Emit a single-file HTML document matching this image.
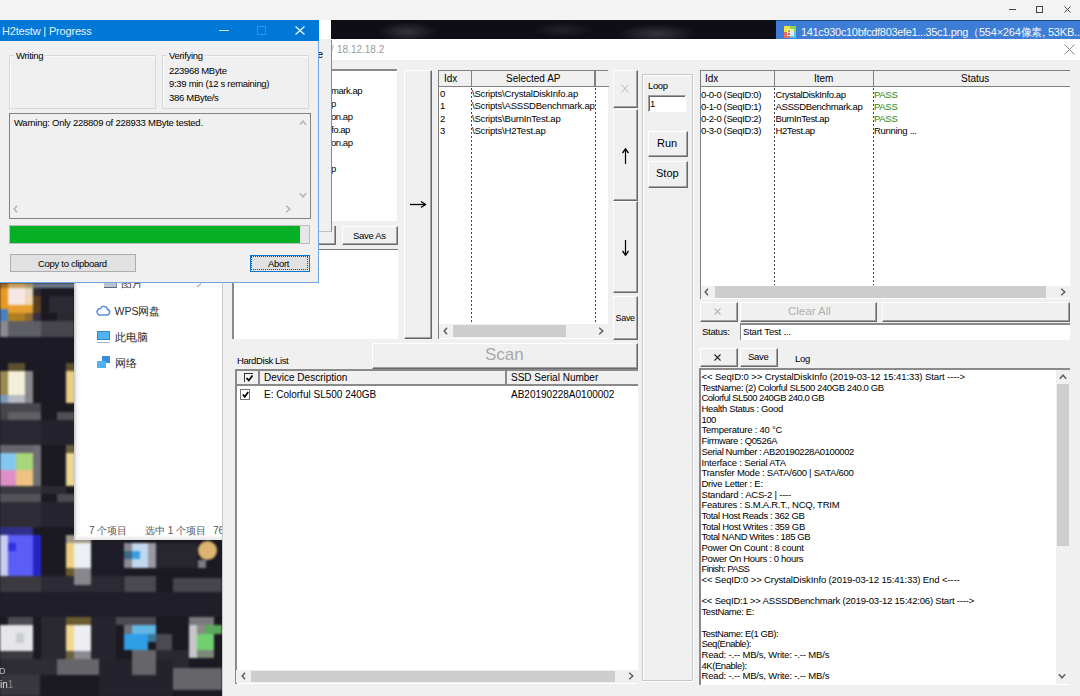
<!DOCTYPE html>
<html><head><meta charset="utf-8">
<style>
*{margin:0;padding:0;box-sizing:border-box}
html,body{width:1080px;height:696px;overflow:hidden;background:#f0f0f0;font-family:"Liberation Sans",sans-serif;color:#000}
.a{position:absolute}
.t{font-size:9.5px;letter-spacing:-0.3px;white-space:pre;line-height:1}
.h{font-size:10px;white-space:pre;line-height:1}
.btn{position:absolute;background:#f0f0f0;border-top:1px solid #fff;border-left:1px solid #fff;border-right:1px solid #696969;border-bottom:1px solid #696969;box-shadow:inset -1px -1px 0 #a0a0a0}
.sunk{position:absolute;background:#fff;border-top:1px solid #a0a0a0;border-left:1px solid #a0a0a0;border-right:1px solid #fff;border-bottom:1px solid #fff;box-shadow:inset 1px 1px 0 #696969}
.dl{position:absolute;width:1px;background:repeating-linear-gradient(#444 0 2px,transparent 2px 4px)}
.sb{position:absolute;background:#f0f0f0}
.thumb{position:absolute;background:#cdcdcd}
.arr{position:absolute;font-size:10px;color:#606060;line-height:1}
</style></head><body>

<!-- top bar -->
<div class="a" style="left:0;top:0;width:1080px;height:20px;background:#f3f3f3"></div>
<div class="a" style="left:1009px;top:9px;width:7px;height:1px;background:#444"></div>
<div class="a" style="left:1036px;top:5.5px;width:7px;height:7px;border:1px solid #444"></div>
<svg class="a" style="left:1064px;top:5.5px" width="7" height="7"><path d="M0.5 0.5L6.5 6.5M6.5 0.5L0.5 6.5" stroke="#444" stroke-width="1"/></svg>

<!-- dark image band + blue tab -->
<div class="a" style="left:319px;top:20px;width:12px;height:19px;background:#fff"></div>
<div class="a" style="left:331px;top:20px;width:445px;height:19px;background:radial-gradient(ellipse 30px 10px at 76px 12px,#34343c,transparent),radial-gradient(ellipse 40px 10px at 326px 14px,#34343c,transparent),radial-gradient(ellipse 30px 8px at 232px 10px,#22222a,transparent),#0f0e16"></div>
<div class="a" style="left:776px;top:20px;width:304px;height:19px;background:#3d7dd6;border-top:1px solid #1d4a8f"></div>
<div class="a" style="left:784px;top:26px;width:12px;height:12px;background:conic-gradient(from 0deg at 50% 50%,#8ad850 0 25%,#5cc8e8 25% 50%,#e8705a 50% 75%,#f0e040 75% 100%)"></div>
<div class="a" style="left:786.5px;top:28.5px;width:7px;height:7px;background:#f4f4e8;opacity:.85"></div>
<div class="a" style="left:787.5px;top:30px;width:2px;height:2px;background:#c0a030"></div>
<div class="a" style="left:787.5px;top:33px;width:2px;height:2px;background:#d06050"></div>
<div class="a" style="left:801px;top:24.5px;font-size:11px;letter-spacing:-0.33px;color:#f4f8ff;white-space:pre;line-height:14px">141c930c10bfcdf803efe1...35c1.png<span style="letter-spacing:-0.2px">（554×264像素, 53KB...</span></div>

<!-- main app title bar -->
<div class="a" style="left:331px;top:39px;width:749px;height:21px;background:#fff"></div>
<div class="a h" style="left:337px;top:45px;color:#9a9a9a;font-size:10px">18.12.18.2</div>
<svg class="a" style="left:1064px;top:44px" width="11" height="11"><path d="M0.5 0.5L10.5 10.5M10.5 0.5L0.5 10.5" stroke="#888" stroke-width="1"/></svg>

<!-- main app body -->
<div class="a" style="left:222px;top:60px;width:858px;height:636px;background:#f0f0f0;border-left:1px solid #c8c8c8"></div>


<!-- scripts listbox (partially hidden) -->
<div class="a" style="left:300px;top:69px;width:97px;height:152px;background:#fff;border-top:2px solid #8a8a8a"></div>
<div class="a t" style="left:331px;top:84px;line-height:13px;letter-spacing:-0.45px">mark.ap
p
on.ap
fo.ap
on.ap

p</div>
<!-- strip of window behind progress -->
<div class="a" style="left:332px;top:45px;width:1px;height:6px;background:#b0b0b0;transform:skewX(-15deg)"></div>
<div class="btn" style="left:300px;top:226px;width:36px;height:19px;border-top:0"></div>
<div class="a" style="left:319px;top:40px;width:13px;height:192px;background:#f0f0f0;border-right:1px solid #8a8a8a;border-bottom:1px solid #c0c0c0"></div>
<div class="a" style="left:317.5px;top:50px;font-size:10px;line-height:1">e</div>
<div class="btn" style="left:342px;top:226px;width:56px;height:19px"></div>
<div class="a t" style="left:353px;top:231px">Save As</div>
<!-- second listbox -->
<div class="a" style="left:232px;top:248.5px;width:166px;height:90px;background:#fff;border-top:1.5px solid #777;border-left:2px solid #8a8a8a"></div>
<!-- arrow button -->
<div class="btn" style="left:404px;top:70px;width:28px;height:269px"></div>
<svg class="a" style="left:409px;top:200px" width="18" height="9"><path d="M1 4.5H16" stroke="#000" stroke-width="1.3"/><path d="M12 1.5L16.5 4.5L12 7.5" stroke="#000" stroke-width="1.3" fill="none"/></svg>

<!-- selected AP listview -->
<div class="a" style="left:437.5px;top:69.5px;width:170.5px;height:269px;background:#fff;border-top:1.5px solid #808080;border-left:1.5px solid #808080"></div>
<div class="a" style="left:439px;top:71px;width:169.5px;height:15.5px;background:#f0f0f0;border-bottom:1.5px solid #808080"></div>
<div class="a" style="left:470.5px;top:71px;width:1.5px;height:15px;background:#808080"></div>
<div class="a" style="left:594px;top:71px;width:1.5px;height:15px;background:#808080"></div>
<div class="a h" style="left:444px;top:74px">Idx</div>
<div class="a h" style="left:506px;top:74px">Selected AP</div>
<div class="dl" style="left:471px;top:88px;height:236px"></div>
<div class="dl" style="left:594.5px;top:88px;height:236px"></div>
<div class="a t" style="left:440px;top:88px;line-height:12.3px">0
1
2
3</div>
<div class="a t" style="left:472px;top:88px;line-height:12.3px;letter-spacing:-0.2px">\Scripts\CrystalDiskInfo.ap
\Scripts\ASSSDBenchmark.ap
\Scripts\BurnInTest.ap
\Scripts\H2Test.ap</div>
<div class="sb" style="left:439px;top:324px;width:170px;height:14px"></div>
<div class="thumb" style="left:453px;top:325px;width:113px;height:12px"></div>
<svg class="a" style="left:442.5px;top:326.5px" width="6" height="8"><path d="M4.0 0.8L1.2 4L4.0 7.2" stroke="#606060" stroke-width="1.5" fill="none"/></svg>
<svg class="a" style="left:597.5px;top:326.5px" width="6" height="8"><path d="M1.2 0.8L4.8 4L1.2 7.2" stroke="#606060" stroke-width="1.5" fill="none"/></svg>

<!-- small buttons column -->
<div class="btn" style="left:613px;top:70px;width:25px;height:38px"></div>
<svg class="a" style="left:621px;top:84px" width="8" height="9"><path d="M0.5 0.5L7.5 8.5M7.5 0.5L0.5 8.5" stroke="#b8b8b8" stroke-width="1"/></svg>
<div class="btn" style="left:613px;top:109px;width:25px;height:92px"></div>
<svg class="a" style="left:621px;top:148px" width="9" height="17"><path d="M4.5 16V1" stroke="#000" stroke-width="1.2"/><path d="M1.5 5L4.5 0.8L7.5 5" stroke="#000" stroke-width="1.3" fill="none"/></svg>
<div class="btn" style="left:613px;top:201px;width:25px;height:92px"></div>
<svg class="a" style="left:621px;top:239px" width="9" height="17"><path d="M4.5 1V16" stroke="#000" stroke-width="1.2"/><path d="M1.5 12L4.5 16.2L7.5 12" stroke="#000" stroke-width="1.3" fill="none"/></svg>
<div class="btn" style="left:613px;top:296px;width:25px;height:44px"></div>
<div class="a t" style="left:615.5px;top:314px;font-size:9px;letter-spacing:-0.3px">Save</div>

<!-- Scan button -->
<div class="btn" style="left:372px;top:343px;width:266px;height:26px"></div>
<div class="a" style="left:485px;top:346px;font-size:17px;color:#a8a8a8;line-height:17px">Scan</div>

<!-- HardDisk list -->
<div class="a t" style="left:237px;top:356px;font-size:9.5px;letter-spacing:-0.4px">HardDisk List</div>
<div class="a" style="left:234.5px;top:368.5px;width:403.5px;height:315px;background:#fff;border-top:2px solid #8a8a8a;border-left:2px solid #8a8a8a"></div>
<div class="a" style="left:236.5px;top:370.5px;width:401.5px;height:15px;background:#f0f0f0;border-bottom:2px solid #8a8a8a"></div>
<div class="a" style="left:258px;top:370.5px;width:1.5px;height:14px;background:#8a8a8a"></div>
<div class="a" style="left:505px;top:370.5px;width:1.5px;height:14px;background:#8a8a8a"></div>
<div class="a" style="left:244px;top:373px;width:9px;height:9px;border-top:1.5px solid #333;border-left:1.5px solid #333;background:#f4f4f4"></div>
<svg class="a" style="left:245px;top:374px" width="9" height="8"><path d="M1.5 4L3.8 6.5L7.5 1.5" stroke="#000" stroke-width="1.7" fill="none"/></svg>
<div class="a h" style="left:264px;top:373px">Device Description</div>
<div class="a h" style="left:511px;top:373px">SSD Serial Number</div>
<div class="a" style="left:239.5px;top:389px;width:10.5px;height:10.5px;border:1.5px solid #777;background:#fff"></div>
<svg class="a" style="left:240.5px;top:390px" width="9" height="9"><path d="M1.8 4.5L3.8 6.8L7.2 2" stroke="#000" stroke-width="1.7" fill="none"/></svg>
<div class="a h" style="left:264px;top:390px">E: Colorful SL500 240GB</div>
<div class="a h" style="left:511px;top:390px">AB20190228A0100002</div>
<div class="sb" style="left:236px;top:670px;width:402px;height:13px"></div>
<div class="thumb" style="left:251px;top:671px;width:364px;height:11px"></div>
<svg class="a" style="left:240.5px;top:672.0px" width="6" height="8"><path d="M4.0 0.8L1.2 4L4.0 7.2" stroke="#606060" stroke-width="1.5" fill="none"/></svg>
<svg class="a" style="left:627.5px;top:672.0px" width="6" height="8"><path d="M1.2 0.8L4.8 4L1.2 7.2" stroke="#606060" stroke-width="1.5" fill="none"/></svg>

<!-- Loop groupbox -->
<div class="a" style="left:642px;top:74px;width:51px;height:607px;border:1px solid #c8c8c8;box-shadow:inset 1px 1px 0 #fff, 1px 1px 0 #fff"></div>
<div class="a t" style="left:648px;top:81px;font-size:9.5px;letter-spacing:-0.4px">Loop</div>
<div class="sunk" style="left:648px;top:95px;width:38px;height:17px"></div>
<div class="a t" style="left:650px;top:99px">1</div>
<div class="btn" style="left:648px;top:131px;width:40px;height:26px"></div>
<div class="a" style="left:657px;top:138px;font-size:11px;line-height:11px">Run</div>
<div class="btn" style="left:648px;top:161px;width:40px;height:27px"></div>
<div class="a" style="left:656px;top:168px;font-size:11px;line-height:11px">Stop</div>


<!-- status listview -->
<div class="a" style="left:699.5px;top:69.5px;width:370px;height:229px;background:#fff;border-top:1.5px solid #808080;border-left:1.5px solid #808080"></div>
<div class="a" style="left:701px;top:71px;width:368.5px;height:15.5px;background:#f0f0f0;border-bottom:1.5px solid #808080"></div>
<div class="a" style="left:773.5px;top:71px;width:1.5px;height:15px;background:#808080"></div>
<div class="a" style="left:872.5px;top:71px;width:1.5px;height:15px;background:#808080"></div>
<div class="a h" style="left:705px;top:74px">Idx</div>
<div class="a h" style="left:814px;top:74px">Item</div>
<div class="a h" style="left:961px;top:74px">Status</div>
<div class="dl" style="left:774px;top:88px;height:197px"></div>
<div class="dl" style="left:873px;top:88px;height:197px"></div>
<div class="a t" style="left:701px;top:88.5px;line-height:12.33px;letter-spacing:-0.37px">0-0-0 (SeqID:0)
0-1-0 (SeqID:1)
0-2-0 (SeqID:2)
0-3-0 (SeqID:3)</div>
<div class="a t" style="left:775.5px;top:88.5px;line-height:12.33px;letter-spacing:-0.39px">CrystalDiskInfo.ap
ASSSDBenchmark.ap
BurnInTest.ap
H2Test.ap</div>
<div class="a t" style="left:874px;top:88.5px;line-height:12.33px"><span style="color:#1a8a1a">PASS
PASS
PASS</span>
Running ...</div>
<div class="sb" style="left:701px;top:286px;width:369px;height:12px"></div>
<div class="thumb" style="left:715px;top:286px;width:331px;height:12px"></div>
<svg class="a" style="left:704.0px;top:288.0px" width="6" height="8"><path d="M4.0 0.8L1.2 4L4.0 7.2" stroke="#606060" stroke-width="1.5" fill="none"/></svg>
<svg class="a" style="left:1059.5px;top:288.0px" width="6" height="8"><path d="M1.2 0.8L4.8 4L1.2 7.2" stroke="#606060" stroke-width="1.5" fill="none"/></svg>

<!-- buttons row -->
<div class="btn" style="left:700px;top:302px;width:38px;height:20px"></div>
<svg class="a" style="left:714px;top:308px" width="7" height="7"><path d="M0.5 0.5L6.5 6.5M6.5 0.5L0.5 6.5" stroke="#b4b4b4" stroke-width="1.1"/></svg>
<div class="btn" style="left:740px;top:302px;width:137px;height:20px"></div>
<div class="a" style="left:788px;top:305px;font-size:11.5px;color:#b0b0b0;line-height:12px">Clear All</div>
<div class="btn" style="left:882px;top:302px;width:188px;height:20px"></div>
<!-- status row -->
<div class="a t" style="left:702px;top:327px">Status:</div>
<div class="a" style="left:740px;top:323px;width:330px;height:17px;background:#fff;border-top:2px solid #8a8a8a;border-left:1px solid #8a8a8a"></div>
<div class="a t" style="left:743px;top:327px;letter-spacing:-0.2px">Start Test ...</div>
<!-- X save log -->
<div class="btn" style="left:700px;top:348px;width:38px;height:19px"></div>
<svg class="a" style="left:714px;top:354px" width="7" height="7"><path d="M0.5 0.5L6.5 6.5M6.5 0.5L0.5 6.5" stroke="#222" stroke-width="1.1"/></svg>
<div class="btn" style="left:740px;top:348px;width:38px;height:19px"></div>
<div class="a t" style="left:748px;top:352px">Save</div>
<div class="a t" style="left:795px;top:354px">Log</div>

<!-- log box -->
<div class="a" style="left:699px;top:368px;width:371px;height:317px;background:#fff;border-top:2px solid #8a8a8a;border-left:2px solid #8a8a8a"></div>
<div class="sb" style="left:1056px;top:370px;width:14px;height:314px"></div>
<div class="thumb" style="left:1057px;top:384px;width:12px;height:162px"></div>
<svg class="a" style="left:1058.5px;top:374.0px" width="8" height="6"><path d="M0.8 4.8L4 1.2L7.2 4.8" stroke="#606060" stroke-width="1.5" fill="none"/></svg>
<svg class="a" style="left:1058.0px;top:673.0px" width="8" height="6"><path d="M0.8 1.2L4 4.8L7.2 1.2" stroke="#606060" stroke-width="1.5" fill="none"/></svg>
<div class="a t" style="left:701.5px;top:372px;line-height:10.68px"><span style="letter-spacing:-0.09px">&lt;&lt; SeqID:0 &gt;&gt; CrystalDiskInfo (2019-03-12 15:41:33) Start ----&gt;</span>
<span style="letter-spacing:-0.42px">TestName: (2) Colorful SL500 240GB 240.0 GB</span>
<span style="letter-spacing:-0.53px">Colorful SL500 240GB 240.0 GB</span>
<span style="letter-spacing:-0.34px">Health Status : Good</span>
<span style="letter-spacing:-0.55px">100</span>
<span style="letter-spacing:-0.23px">Temperature : 40 °C</span>
<span style="letter-spacing:-0.39px">Firmware : Q0526A</span>
<span style="letter-spacing:-0.41px">Serial Number : AB20190228A0100002</span>
<span style="letter-spacing:-0.18px">Interface : Serial ATA</span>
<span style="letter-spacing:-0.25px">Transfer Mode : SATA/600 | SATA/600</span>
<span style="letter-spacing:-0.28px">Drive Letter : E:</span>
<span style="letter-spacing:-0.21px">Standard : ACS-2 | ----</span>
<span style="letter-spacing:-0.24px">Features : S.M.A.R.T., NCQ, TRIM</span>
<span style="letter-spacing:-0.38px">Total Host Reads : 362 GB</span>
<span style="letter-spacing:-0.32px">Total Host Writes : 359 GB</span>
<span style="letter-spacing:-0.40px">Total NAND Writes : 185 GB</span>
<span style="letter-spacing:-0.30px">Power On Count : 8 count</span>
<span style="letter-spacing:-0.34px">Power On Hours : 0 hours</span>
<span style="letter-spacing:-0.62px">Finish: PASS</span>
<span style="letter-spacing:-0.13px">&lt;&lt; SeqID:0 &gt;&gt; CrystalDiskInfo (2019-03-12 15:41:33) End &lt;----</span>

<span style="letter-spacing:-0.20px">&lt;&lt; SeqID:1 &gt;&gt; ASSSDBenchmark (2019-03-12 15:42:06) Start ----&gt;</span>
<span style="letter-spacing:-0.38px">TestName: E:</span>

<span style="letter-spacing:-0.46px">TestName: E(1 GB):</span>
<span style="letter-spacing:-0.50px">Seq(Enable):</span>
<span style="letter-spacing:-0.17px">Read: -.-- MB/s, Write: -.-- MB/s</span>
<span style="letter-spacing:-0.45px">4K(Enable):</span>
<span style="letter-spacing:-0.17px">Read: -.-- MB/s, Write: -.-- MB/s</span></div>


<!-- ===== desktop mosaic ===== -->
<div class="a" style="left:0;top:283px;width:222px;height:413px;background:#1b1922;overflow:hidden"><div class="a" style="left:0;top:-283px;width:222px;height:696px;filter:blur(0.9px)">
<!--MOS-->
<div class="a" style="left:57px;top:296px;width:17px;height:25px;background:#2a2830"></div>
<div class="a" style="left:49px;top:321px;width:25px;height:16px;background:#4a4a52"></div>
<div class="a" style="left:8px;top:321px;width:33px;height:16px;background:#56565e"></div>
<div class="a" style="left:0px;top:337px;width:76px;height:25px;background:#1c1a26"></div>
<div class="a" style="left:41px;top:363px;width:25px;height:40px;background:#1a1824"></div>
<div class="a" style="left:0px;top:403px;width:41px;height:10px;background:#46464c"></div>
<div class="a" style="left:41px;top:420px;width:35px;height:25px;background:#24222c"></div>
<div class="a" style="left:0px;top:420px;width:41px;height:25px;background:#2a2832"></div>
<div class="a" style="left:41px;top:486px;width:25px;height:8px;background:#2c2a34"></div>
<div class="a" style="left:0px;top:486px;width:41px;height:8px;background:#3a3a42"></div>
<div class="a" style="left:41px;top:502px;width:35px;height:25px;background:#26242e"></div>
<div class="a" style="left:0px;top:502px;width:41px;height:25px;background:#2e2c36"></div>
<div class="a" style="left:91px;top:535px;width:33px;height:41px;background:#1e1c26"></div>
<div class="a" style="left:156px;top:543px;width:41px;height:25px;background:#28262e"></div>
<div class="a" style="left:41px;top:576px;width:82px;height:16px;background:#2c2a34"></div>
<div class="a" style="left:0px;top:592px;width:222px;height:25px;background:#201e28"></div>
<div class="a" style="left:41px;top:617px;width:25px;height:42px;background:#2a2830"></div>
<div class="a" style="left:91px;top:617px;width:25px;height:42px;background:#26242e"></div>
<div class="a" style="left:156px;top:650px;width:33px;height:18px;background:#2a2830"></div>
<div class="a" style="left:99px;top:659px;width:74px;height:37px;background:#24222c"></div>
<div class="a" style="left:0px;top:659px;width:57px;height:16px;background:#2e2c34"></div>
<div class="a" style="left:0px;top:283px;width:8px;height:5px;background:#a86a20"></div>
<div class="a" style="left:8px;top:283px;width:17px;height:5px;background:#c8a060"></div>
<div class="a" style="left:25px;top:283px;width:8px;height:5px;background:#a89870"></div>
<div class="a" style="left:33px;top:283px;width:42px;height:5px;background:#6a7888"></div>
<div class="a" style="left:0px;top:288px;width:8px;height:21px;background:#e89a20"></div>
<div class="a" style="left:8px;top:288px;width:17px;height:17px;background:#f6e6e4"></div>
<div class="a" style="left:25px;top:288px;width:8px;height:8px;background:#e8d8c0"></div>
<div class="a" style="left:25px;top:296px;width:8px;height:9px;background:#f0d8b0"></div>
<div class="a" style="left:8px;top:305px;width:25px;height:8px;background:#e8a030"></div>
<div class="a" style="left:8px;top:313px;width:17px;height:8px;background:#b08020"></div>
<div class="a" style="left:25px;top:313px;width:8px;height:8px;background:#8a6a30"></div>
<div class="a" style="left:33px;top:288px;width:8px;height:8px;background:#2a2830"></div>
<div class="a" style="left:33px;top:296px;width:8px;height:17px;background:#5a4020"></div>
<div class="a" style="left:33px;top:313px;width:8px;height:8px;background:#3a3040"></div>
<div class="a" style="left:0px;top:309px;width:8px;height:12px;background:#4a80c0"></div>
<div class="a" style="left:8px;top:321px;width:33px;height:16px;background:#5e5e66"></div>
<div class="a" style="left:0px;top:321px;width:8px;height:16px;background:#8a8a90"></div>
<div class="a" style="left:49px;top:296px;width:25px;height:17px;background:#2c2a33"></div>
<div class="a" style="left:41px;top:321px;width:33px;height:16px;background:#47464d"></div>
<div class="a" style="left:8px;top:363px;width:17px;height:8px;background:#5a5030"></div>
<div class="a" style="left:0px;top:371px;width:8px;height:24px;background:#9a8a50"></div>
<div class="a" style="left:8px;top:371px;width:17px;height:24px;background:#f3efd9"></div>
<div class="a" style="left:8px;top:395px;width:17px;height:8px;background:#b8bcc2"></div>
<div class="a" style="left:25px;top:371px;width:8px;height:32px;background:#88888c"></div>
<div class="a" style="left:0px;top:395px;width:8px;height:8px;background:#7a9ac0"></div>
<div class="a" style="left:66px;top:363px;width:9px;height:8px;background:#5a5030"></div>
<div class="a" style="left:66px;top:371px;width:9px;height:32px;background:#e8d082"></div>
<div class="a" style="left:8px;top:412px;width:33px;height:8px;background:#606064"></div>
<div class="a" style="left:57px;top:412px;width:18px;height:8px;background:#505054"></div>
<div class="a" style="left:0px;top:403px;width:8px;height:17px;background:#45454a"></div>
<div class="a" style="left:0px;top:445px;width:33px;height:8px;background:#66666c"></div>
<div class="a" style="left:33px;top:445px;width:8px;height:41px;background:#707074"></div>
<div class="a" style="left:0px;top:453px;width:16px;height:17px;background:#82c8ee"></div>
<div class="a" style="left:16px;top:453px;width:17px;height:17px;background:#a8d67a"></div>
<div class="a" style="left:0px;top:470px;width:16px;height:16px;background:#de90c6"></div>
<div class="a" style="left:16px;top:470px;width:17px;height:16px;background:#efc282"></div>
<div class="a" style="left:66px;top:453px;width:9px;height:33px;background:#ecd690"></div>
<div class="a" style="left:66px;top:445px;width:9px;height:8px;background:#6a6040"></div>
<div class="a" style="left:0px;top:494px;width:41px;height:8px;background:#545458"></div>
<div class="a" style="left:57px;top:494px;width:18px;height:8px;background:#4a4a50"></div>
<div class="a" style="left:0px;top:527px;width:33px;height:8px;background:#303088"></div>
<div class="a" style="left:0px;top:535px;width:8px;height:41px;background:#c6cdf0"></div>
<div class="a" style="left:8px;top:535px;width:25px;height:41px;background:#5c5cf6"></div>
<div class="a" style="left:8px;top:543px;width:8px;height:8px;background:#3030e0"></div>
<div class="a" style="left:33px;top:535px;width:8px;height:41px;background:#2424c4"></div>
<div class="a" style="left:0px;top:576px;width:41px;height:16px;background:#3a3a40"></div>
<div class="a" style="left:66px;top:535px;width:25px;height:8px;background:#a09a86"></div>
<div class="a" style="left:66px;top:543px;width:8px;height:25px;background:#eed080"></div>
<div class="a" style="left:74px;top:543px;width:17px;height:25px;background:#eceff4"></div>
<div class="a" style="left:74px;top:568px;width:17px;height:17px;background:#88888c"></div>
<div class="a" style="left:66px;top:568px;width:8px;height:8px;background:#6a5a30"></div>
<div class="a" style="left:124px;top:543px;width:8px;height:25px;background:#8a8a92"></div>
<div class="a" style="left:132px;top:543px;width:16px;height:25px;background:#c0d8ee"></div>
<div class="a" style="left:148px;top:543px;width:8px;height:25px;background:#9a9aa2"></div>
<div class="a" style="left:132px;top:551px;width:8px;height:8px;background:#3a9ee0"></div>
<div class="a" style="left:124px;top:551px;width:8px;height:8px;background:#3a6a8a"></div>
<div class="a" style="left:124px;top:576px;width:32px;height:16px;background:#4a4850"></div>
<div class="a" style="left:173px;top:578px;width:49px;height:14px;background:#46444c"></div>
<div class="a" style="left:198px;top:541px;width:19px;height:19px;background:#dcb670;border-radius:50%"></div>
<div class="a" style="left:198px;top:560px;width:8px;height:8px;background:#7a7a80"></div>
<div class="a" style="left:8px;top:617px;width:25px;height:8px;background:#4a4a50"></div>
<div class="a" style="left:0px;top:625px;width:33px;height:26px;background:#e6e6ea"></div>
<div class="a" style="left:16px;top:633px;width:8px;height:10px;background:#c8ccd0"></div>
<div class="a" style="left:0px;top:651px;width:33px;height:8px;background:#3a3a40"></div>
<div class="a" style="left:66px;top:617px;width:25px;height:8px;background:#6a5a30"></div>
<div class="a" style="left:66px;top:625px;width:8px;height:26px;background:#f0d890"></div>
<div class="a" style="left:74px;top:625px;width:17px;height:26px;background:#eceef2"></div>
<div class="a" style="left:66px;top:651px;width:8px;height:8px;background:#6a6040"></div>
<div class="a" style="left:74px;top:651px;width:17px;height:8px;background:#8a8a90"></div>
<div class="a" style="left:57px;top:659px;width:42px;height:16px;background:#66666a"></div>
<div class="a" style="left:116px;top:617px;width:40px;height:8px;background:#4a4a50"></div>
<div class="a" style="left:132px;top:625px;width:24px;height:9px;background:#62b6e4"></div>
<div class="a" style="left:124px;top:625px;width:8px;height:9px;background:#707078"></div>
<div class="a" style="left:124px;top:634px;width:24px;height:16px;background:#2f9ee6"></div>
<div class="a" style="left:148px;top:634px;width:8px;height:8px;background:#3a7a9a"></div>
<div class="a" style="left:132px;top:650px;width:24px;height:25px;background:#66666a"></div>
<div class="a" style="left:156px;top:634px;width:16px;height:16px;background:#4a4a50"></div>
<div class="a" style="left:189px;top:617px;width:25px;height:8px;background:#7a7a7e"></div>
<div class="a" style="left:189px;top:625px;width:8px;height:33px;background:#c6c6c8"></div>
<div class="a" style="left:197px;top:625px;width:8px;height:9px;background:#8a8a8a"></div>
<div class="a" style="left:205px;top:625px;width:17px;height:9px;background:#5aa85a"></div>
<div class="a" style="left:197px;top:634px;width:17px;height:16px;background:#70d070"></div>
<div class="a" style="left:197px;top:650px;width:17px;height:8px;background:#7a8a7a"></div>
<div class="a" style="left:173px;top:668px;width:49px;height:22px;background:#66666a"></div>
<div class="a" style="left:0px;top:675px;width:40px;height:21px;background:#3a383f"></div>

<!--/MOS-->
</div></div>
<div class="a" style="left:0;top:679px;font-size:10px;color:#ddd;line-height:11px;filter:blur(0.3px)">in<span style="color:#888">1</span></div>
<div class="a" style="left:-1px;top:666px;font-size:9px;color:#bbb;line-height:10px;filter:blur(0.3px)">D</div>

<!-- ===== explorer panel ===== -->
<div class="a" style="left:74px;top:283px;width:148px;height:258px;overflow:hidden">
<div class="a" style="left:0;top:0;width:148px;height:257px;background:linear-gradient(90deg,#c8c8cc 0,#f4f4f6 3px,#fff 7px);filter:blur(0.6px)"></div>
<div class="a" style="left:2px;top:252px;width:146px;height:5px;background:linear-gradient(#fff,#e6e6e8)"></div>
<div class="a" style="left:30px;top:-1px;width:13px;height:6px;background:#b8c4d0;border-bottom:1px solid #5a6a80;border-right:1px solid #8090a0"></div>
<div class="a" style="left:47px;top:-5px;font-size:10.5px;line-height:11px;color:#333">图片</div>
<svg class="a" style="left:122px;top:0px" width="6" height="5"><path d="M1 4L5 0.5" stroke="#aaa" stroke-width="1.2"/></svg>
<svg class="a" style="left:22px;top:22px" width="15" height="11"><path d="M4 10h7a2.8 2.8 0 0 0 0.6-5.5A3.8 3.8 0 0 0 4.4 3.6A3 3 0 0 0 4 10z" fill="none" stroke="#5a8ee6" stroke-width="1.5"/></svg>
<div class="a" style="left:40.5px;top:21.5px;font-size:10.5px;line-height:12px;color:#2a2a2a;white-space:pre">WPS网盘</div>
<div class="a" style="left:23px;top:48px;width:13px;height:9px;background:#52b2f2;border:1px solid #2a8ad0"></div>
<div class="a" style="left:23px;top:59px;width:13px;height:1px;background:#a0b4c8"></div>
<div class="a" style="left:40.5px;top:47.5px;font-size:10.5px;line-height:12px;color:#2a2a2a;white-space:pre">此电脑</div>
<div class="a" style="left:28px;top:73px;width:8px;height:7px;background:#3a8ae0"></div>
<div class="a" style="left:23px;top:78px;width:9px;height:7px;background:#50b0f0"></div>
<div class="a" style="left:40.5px;top:74px;font-size:10.5px;line-height:12px;color:#2a2a2a;white-space:pre">网络</div>
<div class="a" style="left:15px;top:242px;font-size:10px;line-height:12px;color:#555;white-space:pre">7 个项目</div><div class="a" style="left:71px;top:242px;font-size:10px;line-height:12px;color:#555;white-space:pre">选中 1 个项目</div><div class="a" style="left:139px;top:242px;font-size:10px;line-height:12px;color:#555;white-space:pre">76</div>
</div>

<!-- ===== progress window ===== -->
<div class="a" style="left:0;top:20px;width:319px;height:263px;background:#f0f0f0;border-right:1px solid #6ea6e6;border-bottom:1px solid #6ea6e6"></div>
<div class="a" style="left:0;top:20px;width:319px;height:21px;background:#0078d7"></div>
<div class="a" style="left:2px;top:24.5px;font-size:11px;letter-spacing:-0.18px;line-height:13px;color:#e6f2ff;white-space:pre">H2testw | Progress</div>
<div class="a" style="left:219px;top:30px;width:10px;height:1px;background:#cfe4f7"></div>
<div class="a" style="left:257px;top:26px;width:9px;height:9px;border:1px solid #3a90e0"></div>
<svg class="a" style="left:295px;top:26px" width="10" height="9"><path d="M0.5 0.5L9.5 8.5M9.5 0.5L0.5 8.5" stroke="#f0f8ff" stroke-width="1.2"/></svg>
<!-- groupboxes -->
<div class="a" style="left:9px;top:55px;width:147px;height:54px;border:1px solid #d8d8d8;box-shadow:inset 1px 1px 0 #fafafa"></div>
<div class="a t" style="left:14px;top:51px;padding:0 2px;background:#f0f0f0">Writing</div>
<div class="a" style="left:162px;top:55px;width:147px;height:54px;border:1px solid #d8d8d8;box-shadow:inset 1px 1px 0 #fafafa"></div>
<div class="a t" style="left:167px;top:51px;padding:0 2px;background:#f0f0f0">Verifying</div>
<div class="a t" style="left:169px;top:63.5px;line-height:13.65px">223968 MByte
9:39 min (12 s remaining)
386 MByte/s</div>
<!-- warning box -->
<div class="a" style="left:9px;top:113px;width:302px;height:106px;background:#f0f0f0;border:1px solid #828282"></div>
<div class="a t" style="left:14px;top:117.5px;letter-spacing:-0.25px">Warning: Only 228809 of 228933 MByte tested.</div>
<svg class="a" style="left:299.0px;top:120.0px" width="8" height="6"><path d="M0.8 4.8L4 1.2L7.2 4.8" stroke="#b4b4b4" stroke-width="1.5" fill="none"/></svg>
<svg class="a" style="left:299.0px;top:192.0px" width="8" height="6"><path d="M0.8 1.2L4 4.8L7.2 1.2" stroke="#b4b4b4" stroke-width="1.5" fill="none"/></svg>
<svg class="a" style="left:13.0px;top:204.5px" width="6" height="8"><path d="M4.0 0.8L1.2 4L4.0 7.2" stroke="#b4b4b4" stroke-width="1.5" fill="none"/></svg>
<svg class="a" style="left:284.5px;top:204.5px" width="6" height="8"><path d="M1.2 0.8L4.8 4L1.2 7.2" stroke="#b4b4b4" stroke-width="1.5" fill="none"/></svg>
<!-- progress bar -->
<div class="a" style="left:9px;top:225px;width:301px;height:19px;background:#e6e6e6;border:1px solid #bcbcbc"></div>
<div class="a" style="left:10px;top:226px;width:290px;height:17px;background:#06b025"></div>
<!-- buttons -->
<div class="a" style="left:10px;top:254px;width:126px;height:18px;background:#e1e1e1;border:1px solid #adadad"></div>
<div class="a t" style="left:38px;top:259px">Copy to clipboard</div>
<div class="a" style="left:249.5px;top:254.5px;width:60px;height:17px;background:#e1e1e1;border:1.5px solid #0a78d0"></div>
<div class="a" style="left:251px;top:256px;width:57px;height:14px;border:1px dotted #444"></div>
<div class="a t" style="left:268px;top:259px">Abort</div>

</body></html>
